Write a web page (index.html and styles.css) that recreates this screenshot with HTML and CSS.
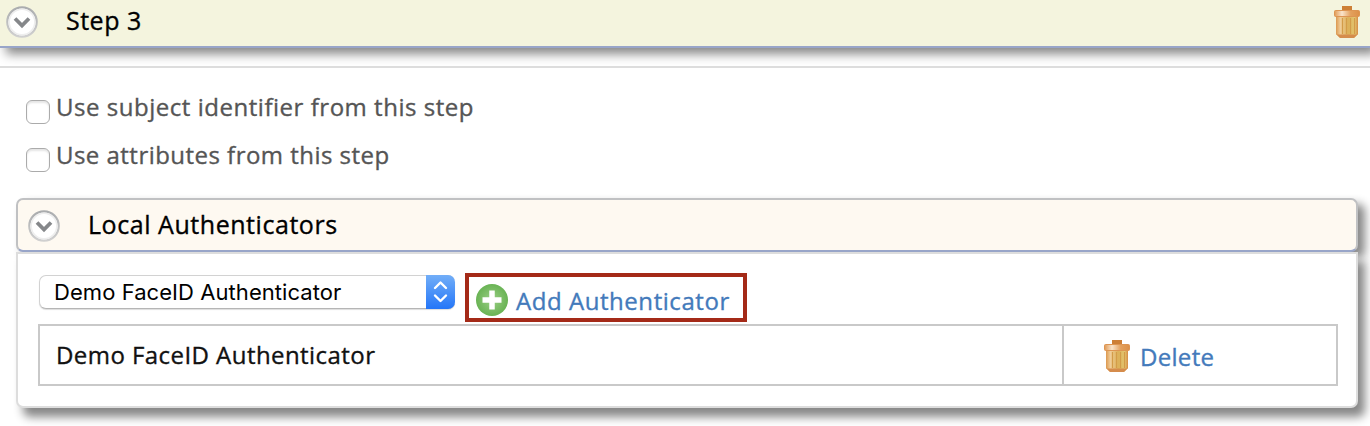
FILE: index.html
```
<!DOCTYPE html>
<html lang="en">
<head>
<meta charset="utf-8">
<title>Authentication step</title>
<link rel="stylesheet" href="styles.css">
</head>
<body>
<svg class="defs" width="0" height="0" aria-hidden="true">
  <defs>
    <linearGradient id="lid" x1="0" x2="1"><stop offset="0" stop-color="#e09a55"/><stop offset=".3" stop-color="#fae4cb"/><stop offset=".65" stop-color="#e3a05c"/><stop offset="1" stop-color="#dc9048"/></linearGradient>
    <linearGradient id="can" x1="0" x2="1"><stop offset="0" stop-color="#dc9850"/><stop offset=".2" stop-color="#f0cd98"/><stop offset=".55" stop-color="#dcb058"/><stop offset=".85" stop-color="#e3c670"/><stop offset="1" stop-color="#d68a43"/></linearGradient>
    <linearGradient id="ring" x1="0" y1="0" x2="0" y2="1"><stop offset="0" stop-color="#aaacae"/><stop offset="1" stop-color="#d0d0d0"/></linearGradient>
    <radialGradient id="plus"><stop offset="0" stop-color="#9bcf85"/><stop offset="1" stop-color="#69b354"/></radialGradient>
    <symbol id="trash" viewBox="0 0 26 32">
      <path d="M8 0h10v5H8z" fill="#cd7f36"/>
      <path d="M2 10h22v18q0 1-1 1l-3 3H6l-3-3q-1 0-1-1z" fill="url(#can)"/>
      <path d="M8.500 12v16M12.500 12v16M16.500 12v16M20.500 12v16" stroke="#d39c48" stroke-width="1.200"/>
      <path d="M2.500 28.500h21l-3.500 3.500H6z" fill="#d58c4c"/>
      <rect x=".5" y="4.500" width="25" height="6" rx="1" fill="url(#lid)" stroke="#dd9552"/>
    </symbol>
    <symbol id="toggle" viewBox="0 0 32 32">
      <circle cx="16" cy="16" r="14.700" fill="#fff" stroke="url(#ring)" stroke-width="2.200"/>
      <circle cx="16" cy="16" r="12.800" fill="none" stroke="#eee" stroke-width="1.500"/>
      <path d="M9 12.500l7 7 7-7" fill="none" stroke="#85878a" stroke-width="3.800"/>
    </symbol>
  </defs>
</svg>
<header class="step-bar">
  <svg class="toggle"><use href="#toggle"/></svg>
  <h2 class="step-title">Step 3</h2>
  <svg class="trash"><use href="#trash"/></svg>
</header>
<main class="step-body">
  <div class="options">
    <label class="option"><input type="checkbox" class="check"><span class="subject">Use subject identifier from this step</span></label>
    <label class="option"><input type="checkbox" class="check"><span class="attributes">Use attributes from this step</span></label>
  </div>
  <section class="group">
    <div class="group-bar">
      <svg class="toggle"><use href="#toggle"/></svg>
      <h3 class="group-title">Local Authenticators</h3>
    </div>
    <div class="panel">
      <div class="controls">
        <div class="select">
          <span class="select-text">Demo FaceID Authenticator</span>
          <span class="select-arrows"><svg width="29" height="34" viewBox="0 0 29 34"><path d="M9 13l5.500-5.500L20 13M9 20.500l5.500 5.500 5.500-5.500" fill="none" stroke="#fff" stroke-width="2.400" stroke-linecap="round" stroke-linejoin="round"/></svg></span>
        </div>
        <a class="add">
          <svg width="32" height="32" viewBox="0 0 32 32"><circle cx="16" cy="16" r="16" fill="url(#plus)"/><path d="M16 6.500v19M6.500 16h19" stroke="#fff" stroke-width="5.500"/></svg>
          <span class="add-text">Add Authenticator</span>
        </a>
      </div>
      <div class="row">
        <div class="name"><span class="name-text">Demo FaceID Authenticator</span></div>
        <a class="delete"><svg class="trash"><use href="#trash"/></svg><span class="delete-text">Delete</span></a>
      </div>
    </div>
  </section>
</main>
</body>
</html>
```
FILE: styles.css
```
* { box-sizing: border-box; }
body { margin: 0; height: 426px; overflow: hidden; background: #fff; color: #000; font: 500 24px/32px "Open Sans", "Noto Sans", sans-serif; letter-spacing: .5px; -webkit-text-stroke: .35px currentColor; white-space: nowrap; }
svg { flex: none; display: block; }
.defs { position: absolute; }
h2, h3 { margin: 0; font: inherit; }
.toggle { width: 32px; height: 32px; }
.trash { width: 26px; height: 32px; }

.step-bar { display: flex; height: 48px; padding: 6px 10px 0 6px; background: #f4f4de; border-bottom: 2px solid #98a5c9; box-shadow: 6px 6px 10px #888; }
.step-title { flex: 1; margin: -2px 0 0 28px; font-size: 25px; letter-spacing: .5px; }
.step-body { margin-top: 18px; border-top: 2px solid #ddd; }

.options { padding: 23px 0 0 26px; color: #555; }
.option { display: flex; height: 48px; gap: 6px; }
.subject { letter-spacing: .53px; }
.attributes { letter-spacing: .47px; }
.check { appearance: none; width: 24px; height: 24px; margin: 9px 0 0; border: 1.500px solid #ababab; border-radius: 6px; background: #fff; box-shadow: inset 0 2px 2px #e5e5e5; }

.group { width: 1342px; margin: 11px 0 0 16px; }
.group-bar { display: flex; height: 54px; padding: 10px 10px; background: #fef9f1; border: 2px solid #c0c1c3; border-bottom-color: #98a5c9; border-radius: 7px; box-shadow: 7px 6px 10px #888; }
.group-title { margin: -2px 0 0 28px; font-size: 25px; letter-spacing: .55px; }
.panel { position: relative; height: 156px; padding: 19px 18px 0 20px; background: #fff; border: 2px solid #ddd; border-radius: 0 0 7px 7px; box-shadow: 7px 9px 10px #888; }

.controls { display: flex; gap: 10px; height: 51px; }
.select { display: flex; justify-content: space-between; width: 416px; height: 34px; margin: 2px 0 0 1px; border: 1px solid #d2d2d2; border-right: 0; border-bottom-color: #b5b5b5; border-radius: 7px; background: #fff; box-shadow: 0 1px 1px #ddd; }
.select-text { padding-left: 14px; font: 22px/32px Inter, "Liberation Sans", sans-serif; letter-spacing: .06px; -webkit-text-stroke: 0; }
.select-arrows { height: 34px; margin-top: -1px; border-radius: 0 7px 7px 0; background: linear-gradient(#72aef8, #2476f8); }
.add { display: flex; width: 282px; height: 49px; padding: 7px 7px; gap: 8px; border: 4px solid #a42a18; color: #437abb; }
.add-text { margin-top: 1px; letter-spacing: .55px; }

.row { display: grid; grid-template-columns: 1024px 1fr; height: 62px; border: 2px solid #c9c9c9; }
.name { padding: 13px 0 0 16px; border-right: 2px solid #c9c9c9; }
.name-text { color: #111; letter-spacing: .44px; }
.delete { display: flex; gap: 10px; padding: 14px 0 0 40px; color: #437abb; }
.delete-text { margin-top: 1px; letter-spacing: .3px; }
```
